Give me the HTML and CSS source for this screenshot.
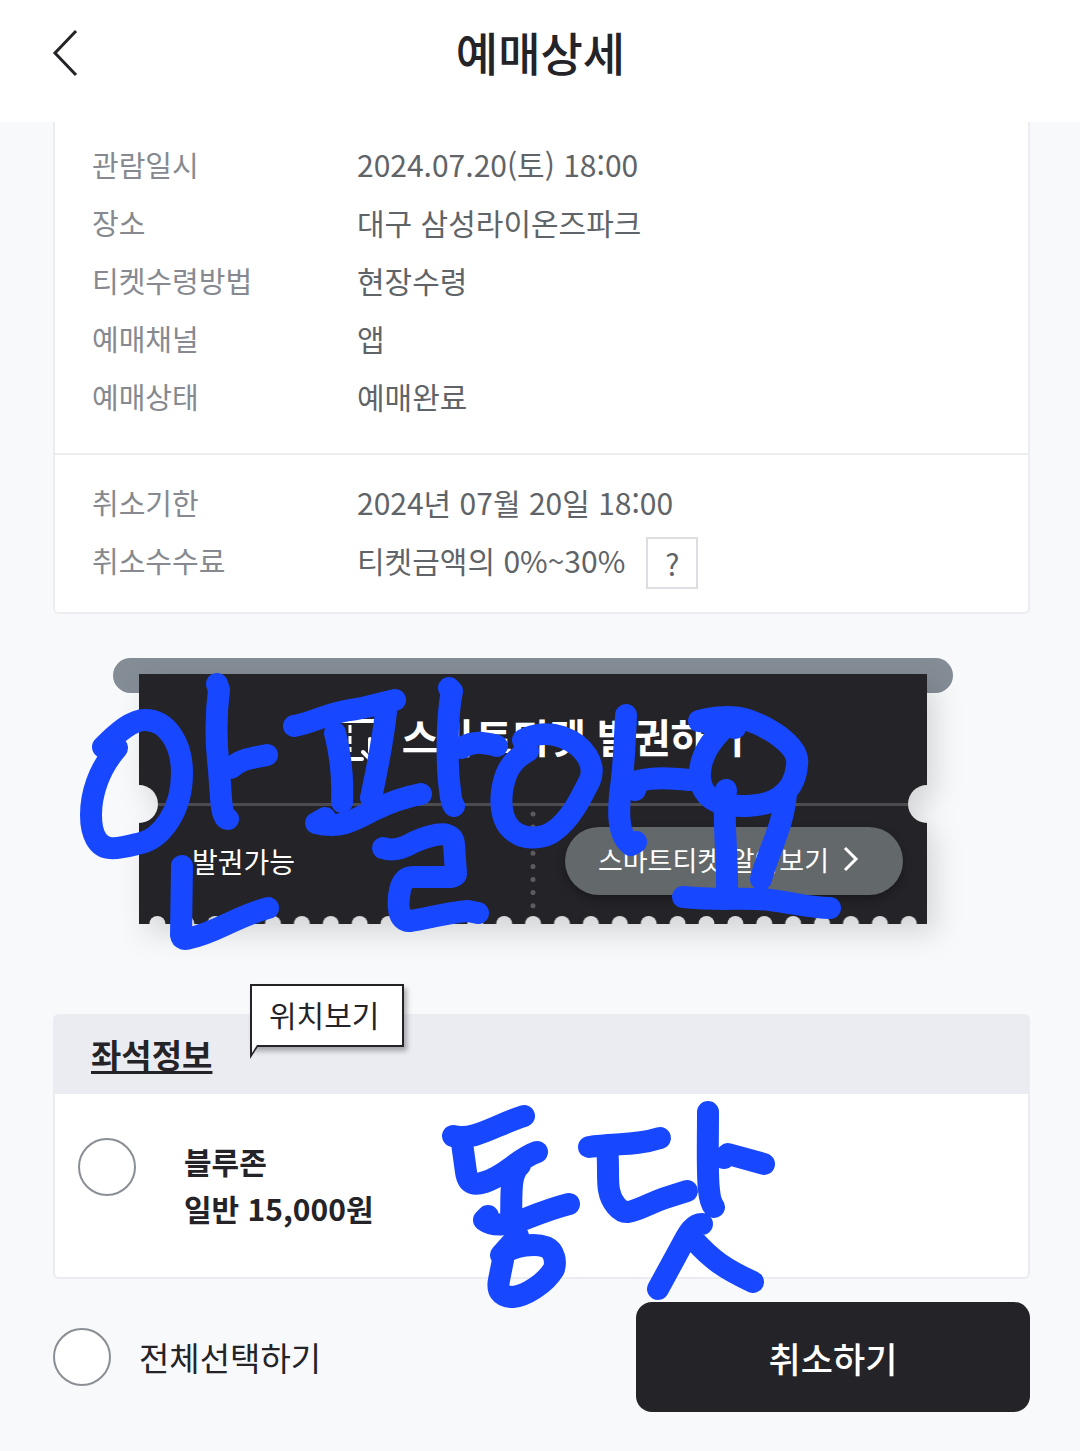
FILE: index.html
```html
<!DOCTYPE html>
<html lang="ko">
<head>
<meta charset="utf-8">
<meta name="viewport" content="width=device-width, initial-scale=1">
<title>예매상세</title>
<link rel="stylesheet" href="styles.css">
</head>
<body>
<div class="page">
  <header class="header">
    <button class="back" type="button" aria-label="뒤로">
      <svg width="28" height="48" viewBox="0 0 28 48" fill="none" stroke="#242328" stroke-width="3"><path d="M25 2 4 24l21 22"/></svg>
    </button>
    <h1 class="title">예매상세</h1>
  </header>

  <main class="main">
    <section class="card">
      <dl class="info">
        <div class="row"><dt>관람일시</dt><dd>2024.07.20(토) 18:00</dd></div>
        <div class="row"><dt>장소</dt><dd>대구 삼성라이온즈파크</dd></div>
        <div class="row"><dt>티켓수령방법</dt><dd>현장수령</dd></div>
        <div class="row"><dt>예매채널</dt><dd>앱</dd></div>
        <div class="row"><dt>예매상태</dt><dd>예매완료</dd></div>
      </dl>
      <dl class="info info-cancel">
        <div class="row"><dt>취소기한</dt><dd>2024년 07월 20일 18:00</dd></div>
        <div class="row"><dt>취소수수료</dt><dd>티켓금액의 0%~30% <button class="help" type="button">?</button></dd></div>
      </dl>
    </section>

    <section class="smart">
      <div class="slot"></div>
      <div class="ticket">
        <svg class="ticket-shape" viewBox="0 0 788 250" preserveAspectRatio="none" aria-hidden="true">
          <defs>
            <pattern id="teeth" x="4" y="0" width="28.9" height="250" patternUnits="userSpaceOnUse">
              <circle cx="14.4" cy="250" r="8"/>
            </pattern>
            <mask id="cut">
              <rect width="788" height="250" fill="#fff"/>
              <circle cx="0" cy="130" r="19"/>
              <circle cx="788" cy="130" r="19"/>
              <rect x="4" width="780" height="250" fill="url(#teeth)"/>
            </mask>
          </defs>
          <rect width="788" height="250" fill="#242328" mask="url(#cut)"/>
        </svg>
        <button class="issue" type="button">
          <svg width="64" height="56" viewBox="0 0 64 56" fill="none" stroke="#fff" stroke-width="4" stroke-linecap="round"><path d="M40 51H11V13h48v10"/><path d="M28 17v27" stroke-width="3" stroke-linecap="butt" stroke-dasharray="8 3"/><path d="m41 44 6 6 14-16M48 31v13"/></svg>
          스마트티켓 발권하기
        </button>
        <div class="ticket-foot">
          <span class="status">발권가능</span>
          <svg class="dots" width="6" height="100" viewBox="0 0 6 100"><path d="M3 3v94" stroke="#5c5b60" stroke-width="5" stroke-linecap="round" stroke-dasharray="0 13.1"/></svg>
          <a class="guide" href="#guide">스마트티켓 알아보기
            <svg width="16" height="26" viewBox="0 0 16 26" fill="none" stroke="#fff" stroke-width="3"><path d="m2 2 11 11L2 24"/></svg>
          </a>
        </div>
      </div>
    </section>

    <section class="seats">
      <div class="seats-head">
        <a class="seats-title" href="#seats">좌석정보</a>
        <div class="tip">위치보기
          <svg class="tip-tail" width="10" height="14" viewBox="0 0 10 14"><path d="M0 0h9L0 14z" fill="#242328"/><path d="M2 0h5L2 8z" fill="#fff"/></svg>
        </div>
      </div>
      <label class="seat">
        <input class="check" type="checkbox">
        <span>블루존<br>일반 15,000원</span>
      </label>
    </section>

    <div class="actions">
      <label class="all"><input class="check" type="checkbox"> 전체선택하기</label>
      <button class="cancel" type="button">취소하기</button>
    </div>
  </main>

  <svg class="ink" viewBox="0 0 1080 1451" role="img" aria-label="안 팔아요 동닷">
    <g fill="none" stroke="#1747ff" stroke-width="22" stroke-linecap="round" stroke-linejoin="round">
      <path d="M103 747C118 732 132 720 145 720C168 720 182 745 182 773C182 810 162 840 137 844C125 847 116 849 110 848C98 847 91 835 91 815C91 795 98 770 117 748L103 747"/>
      <path d="M217 684L219 690C215 720 216 745 219 770L221 798C222 814 225 819 228 819M231 768Q240 760 252 758L267 755"/>
      <path d="M182 866L181 935Q182 941 190 938C215 933 235 917 268 908"/>
      <path d="M294 726C315 722 325 714 350 710C368 708 380 703 395 700M335 733C342 760 343 780 342 802M386 712C383 740 378 765 371 798"/>
      <path d="M325 818L316 823C340 829 355 820 372 811C390 802 405 797 421 794"/>
      <path d="M449 688L452 691C446 720 447 770 450 790Q451 802 454 806M461 748Q472 742 482 743T497 746"/>
      <path d="M383 848C395 852 405 847 414 842C430 835 441 833 447 835Q454 837 454 845L456 873Q457 876 450 877L413 877Q403 877 400 890C397 905 398 922 410 921C425 919 450 912 468 911L478 913"/>
      <path d="M528 751L523 740C535 733 550 733 562 737C585 745 596 765 590 780C580 800 570 820 554 831C545 838 528 840 518 834C498 824 499 795 506 775C511 762 519 756 528 751"/>
      <path d="M626 715C625 740 624 765 621 787C618 810 617 835 631 845L636 842M635 790L638 781C655 777 670 778 690 780"/>
      <path d="M735 728L699 721C715 716 735 716 748 720C775 730 800 748 797 765C796 778 791 790 778 798C765 807 735 808 720 803C705 798 699 785 700 772C701 755 710 742 722 730"/>
      <path d="M726 790C722 820 728 850 727 895M786 793C784 825 768 852 761 879M683 897C720 901 745 897 770 900C795 903 810 908 830 908"/>
      <path d="M453 1136C475 1141 495 1125 524 1116M462 1143L466 1172C468 1186 476 1185 485 1182C507 1175 517 1159 537 1152M520 1165C509 1175 512 1195 511 1222M488 1216L484 1220C495 1228 510 1224 525 1219C545 1211 553 1208 569 1204"/>
      <path d="M518 1236L501 1255C515 1245 535 1243 546 1247C555 1251 556 1262 554 1269C545 1284 525 1296 513 1297C500 1297 497 1290 499 1280L503 1260"/>
      <path d="M589 1147C615 1143 635 1146 660 1138M607 1146C609 1165 607 1180 609 1190C611 1202 620 1213 628 1212C640 1210 652 1202 665 1198L687 1191"/>
      <path d="M708 1112C708 1145 707 1175 709 1190Q710 1202 714 1207M724 1158L728 1154L764 1164M702 1224C693 1224 688 1234 683 1243L658 1289M694 1240C712 1260 725 1269 753 1282"/>
    </g>
  </svg>
</div>
</body>
</html>
```
FILE: styles.css
```css
* { box-sizing: border-box; }

body {
  margin: 0;
  background: #f8f9fb;
  color: #242328;
  font-family: "Noto Sans CJK KR", sans-serif;
  font-size: 30px;
}

button {
  margin: 0;
  padding: 0;
  border: 0;
  background: none;
  color: inherit;
  font: inherit;
}

a { color: inherit; }

.page { position: relative; }

.header {
  display: grid;
  grid-template-columns: 28px 1fr 28px;
  align-items: center;
  height: 122px;
  padding: 0 50px 16px 51px;
  background: #fff;
}

.back svg { display: block; }

.title {
  margin: 0;
  padding-bottom: 4px;
  text-align: center;
  font-size: 46px;
  font-weight: 500;
  line-height: 68px;
}

.main { padding: 0 50px 38px 53px; }

.card {
  border: 2px solid #ebedf0;
  border-top: 0;
  border-radius: 0 0 6px 6px;
  background: #fff;
}

.info {
  margin: 0;
  padding: 13px 37px 28px;
}

.info-cancel {
  padding: 18px 37px 23px;
  border-top: 2px solid #ebedf0;
}

.row {
  display: grid;
  grid-template-columns: 265px 1fr;
  line-height: 58px;
}

.row dt {
  color: #868a90;
  font-size: 29px;
}

.row dd {
  display: flex;
  align-items: center;
  gap: 21px;
  margin: 0;
  color: #5f6468;
}

.help {
  align-self: flex-end;
  width: 52px;
  height: 52px;
  border: 2px solid #dcdee2;
  line-height: 44px;
}

.smart { margin: 44px 77px 0 60px; }

.slot {
  height: 35px;
  border-radius: 18px;
  background: #848c95;
}

.ticket {
  position: relative;
  isolation: isolate;
  margin: -19px 26px 0;
  color: #fff;
}

.ticket-shape {
  position: absolute;
  inset: 0;
  z-index: -1;
  width: 100%;
  height: 100%;
  overflow: visible;
  filter: drop-shadow(8px 12px 14px rgba(0, 0, 0, 0.14));
}

.issue {
  display: flex;
  align-items: center;
  justify-content: center;
  gap: 16px;
  width: 100%;
  height: 129px;
  padding-bottom: 6px;
  font-size: 40px;
  font-weight: 700;
}

.ticket-foot {
  display: flex;
  align-items: center;
  height: 121px;
  margin: 0 19px;
  padding: 0 5px 8px 34px;
  border-top: 3px solid #4c4b4f;
  font-size: 28px;
}

.status { width: 338px; }

.guide {
  display: flex;
  align-items: center;
  gap: 14px;
  height: 68px;
  margin-left: auto;
  padding: 0 44px 4px 33px;
  border-radius: 34px;
  background: #63686b;
  box-shadow: 0 4px 10px rgba(0, 0, 0, 0.3);
  font-size: 27px;
  text-decoration: none;
  white-space: nowrap;
}

.seats {
  margin-top: 90px;
  border: 2px solid #ebecf1;
  border-top: 0;
  border-radius: 6px;
  background: #fff;
}

.seats-head {
  position: relative;
  margin: 0 -2px;
  padding: 16px 38px;
  border-radius: 6px 6px 0 0;
  background: #ebecf2;
}

.seats-title {
  display: block;
  width: max-content;
  font-size: 33px;
  font-weight: 700;
  line-height: 48px;
  text-decoration-thickness: 3px;
  text-decoration-skip-ink: none;
  text-underline-offset: 3px;
}

.tip {
  position: absolute;
  top: -30px;
  left: 197px;
  padding: 0 23px 2px 17px;
  border: 2px solid #242328;
  background: #fff;
  box-shadow: 3px 4px 5px rgba(0, 0, 0, 0.3);
  line-height: 57px;
}

.tip-tail {
  position: absolute;
  top: 59px;
  left: -2px;
}

.seat {
  display: flex;
  gap: 48px;
  padding: 44px 23px 45px;
  font-weight: 700;
  line-height: 47px;
}

.check {
  appearance: none;
  flex: none;
  width: 58px;
  height: 58px;
  margin: 0;
  border: 2px solid #8a8f95;
  border-radius: 50%;
  background: #fff;
}

.actions {
  display: flex;
  align-items: center;
  justify-content: space-between;
  margin-top: 23px;
}

.all {
  display: flex;
  align-items: center;
  gap: 28px;
  font-size: 33px;
}

.cancel {
  width: 394px;
  height: 110px;
  border-radius: 16px;
  background: #242328;
  color: #fff;
  font-size: 35px;
  font-weight: 500;
}

/* Handwritten note over the whole page */
.ink {
  position: absolute;
  top: 0;
  left: 0;
  width: 100%;
  pointer-events: none;
}
```
